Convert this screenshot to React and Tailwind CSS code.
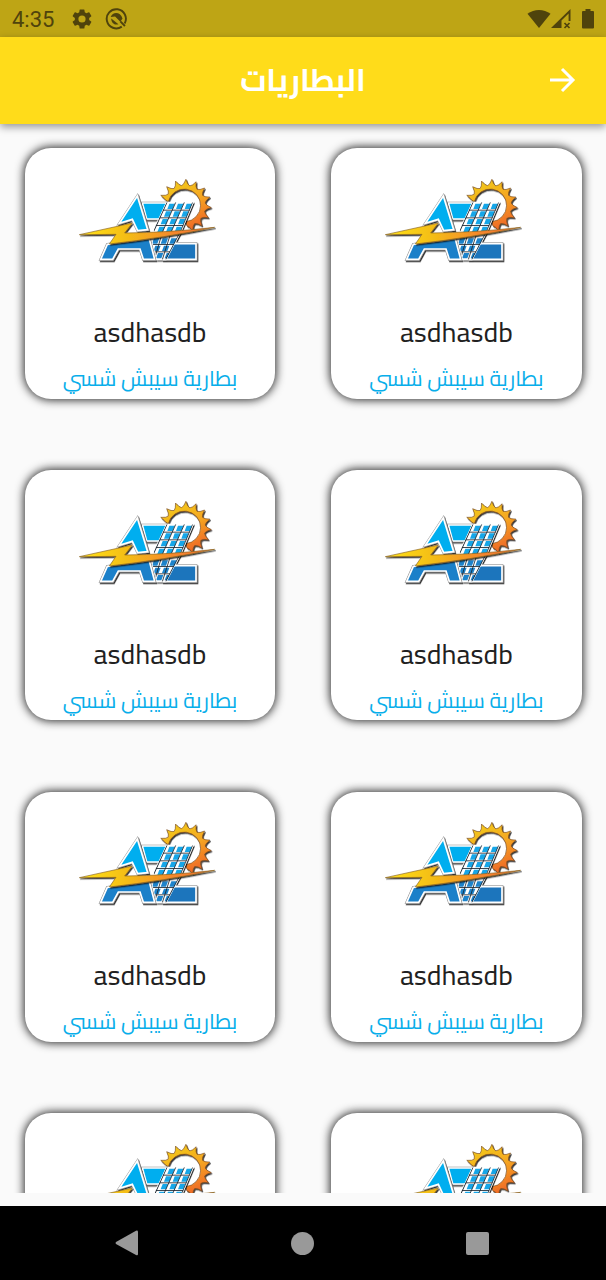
import { useId } from "react";

function point(cx, cy, r, deg) {
  const a = (deg * Math.PI) / 180;
  return `${(cx + r * Math.cos(a)).toFixed(1)} ${(cy + r * Math.sin(a)).toFixed(1)}`;
}

// Toothed crescent that forms the sun of the logo.
function gearPath() {
  const cx = 330;
  const cy = 92;
  const step = 23;
  let d = `M${point(cx, cy, 60, -164)}`;
  for (let i = 0; i < 11; i++) {
    const tip = -157 + i * step;
    d += ` Q${point(cx, cy, 63, tip - 5)} ${point(cx, cy, 79, tip)}`;
    d += ` Q${point(cx, cy, 63, tip + 5)} ${point(cx, cy, 61, tip + step / 2)}`;
  }
  return `${d} L332 140 A49 49 0 1 0 280 80 Z`;
}

const GEAR = gearPath();
const UPPER_A = "M187 63 L218 164 L188 167 L172 133 L133 145 Z";
const LOWER_A = "M97 208 L223 192 L239 253 L205 253 L195 222 L130 222 L113 253 L77 253 Z";
const TOP_BAR = "M202 84 H275 L255 132 H215 Z";
const BOTTOM_BAR = "M290 206 H363 V253 H267 Z";
const PANEL = "M275 82 H354 L318 168 L273 254 H246 L230 192 L238 162 Z";
const BOLT = "M13 179 L172 144 L149 174 Q280 173 419 157 Q270 188 103 207 L123 178 Z";
const CELLS = [
  [86, 277],
  [109, 267],
  [132, 257],
  [155, 247],
  [190, 231],
  [212, 235],
  [234, 243],
];

function Logo() {
  const id = useId();
  return (
    <svg viewBox="0 0 435 276" className="mr-[5px] h-[92px] w-[145px] shrink-0">
      <defs>
        <linearGradient id={`${id}sun`} x1="0.2" y1="0" x2="0.65" y2="1">
          <stop offset="0.1" stopColor="#f2c61a" />
          <stop offset="0.5" stopColor="#f5a623" />
          <stop offset="1" stopColor="#ee6426" />
        </linearGradient>
        <linearGradient id={`${id}bolt`}>
          <stop offset="0" stopColor="#ffe31b" />
          <stop offset="0.35" stopColor="#f4bd16" />
          <stop offset="0.7" stopColor="#f5872d" />
          <stop offset="1" stopColor="#f26f32" />
        </linearGradient>
        <clipPath id={`${id}panel`}>
          <path d={PANEL} />
        </clipPath>
        <filter id={`${id}shade`} x="-10%" y="-10%" width="120%" height="120%">
          <feDropShadow dx="3" dy="4" stdDeviation="1.300" floodColor="#000" floodOpacity="0.8" />
        </filter>
      </defs>
      <g filter={`url(#${id}shade)`}>
        <path d={GEAR} fill={`url(#${id}sun)`} stroke="#7a4a1c" strokeWidth="2" />
      </g>
      <g filter={`url(#${id}shade)`}>
        <path d={`${TOP_BAR} ${BOTTOM_BAR} ${LOWER_A}`} fill="none" stroke="#888" strokeWidth="8" />
        <path d={TOP_BAR} fill="#00aeef" stroke="#fff" strokeWidth="5" />
        <path d={BOTTOM_BAR} fill="#1b75bc" stroke="#fff" strokeWidth="5" />
        <path d={PANEL} fill="#fff" stroke="#fff" strokeWidth="4" />
      </g>
      <g clipPath={`url(#${id}panel)`}>
        {CELLS.map(([y, left]) =>
          [0, 1, 2].map((col) => {
            const x = left + col * 26;
            return (
              <path
                key={`${y}-${col}`}
                d={`M${x + 6} ${y} h16 l-6 16 h-16 z`}
                fill={y > 180 ? "#1d83cb" : "#16a6e8"}
              />
            );
          }),
        )}
        <path
          d="M303 80 L262 172 L238 254 M329 80 L288 172 L262 254 M230 105.500 H360 M230 128.500 H360 M230 151.500 H360 M230 208.500 H360 M230 230.500 H360"
          stroke="#17222c"
          strokeWidth="2.500"
          fill="none"
        />
        <path d="M276 80 L236 168 M354 82 L318 168 L273 254" fill="none" stroke="#17222c" strokeWidth="4" />
      </g>
      <path d={LOWER_A} fill="#1b80c9" stroke="#fff" strokeWidth="5" />
      <g filter={`url(#${id}shade)`}>
        <path d={UPPER_A} fill="none" stroke="#999" strokeWidth="8" />
        <path d={UPPER_A} fill="#00aeef" stroke="#fff" strokeWidth="5" />
      </g>
      <g filter={`url(#${id}shade)`}>
        <path d={BOLT} fill={`url(#${id}bolt)`} stroke="#8a6420" strokeWidth="2" />
      </g>
    </svg>
  );
}

function ProductCard({ name, description }) {
  return (
    <article className="flex h-[250.500px] w-[250.500px] flex-col items-center rounded-[26px] bg-white pt-[26.700px] shadow-[0_0_10px_1px_rgba(0,0,0,0.85)]">
      <Logo />
      {name && (
        <h2 className="mt-[45px] text-[27.800px] leading-[40px] whitespace-nowrap text-[#212121]">{name}</h2>
      )}
      {description && (
        <p dir="rtl" className="mt-[8px] text-[21.600px] leading-[36px] whitespace-nowrap text-[#08aeea]">
          {description}
        </p>
      )}
    </article>
  );
}

function StatusBar() {
  return (
    <div className="flex h-[37px] items-center bg-[#bea515] px-3 text-[#4f430c]">
      <span className="w-[44px] pt-0.5 font-[Roboto] text-[22px] leading-none">4:35</span>
      <svg viewBox="0 0 24 24" className="ml-[14px] size-[24px]" fill="currentColor">
        <path d="M19.140 12.940c.04-.3.06-.61.06-.94s-.02-.64-.07-.94l2.030-1.580a.49.49 0 0 0 .12-.61l-1.920-3.320a.49.49 0 0 0-.59-.22l-2.390.96a7 7 0 0 0-1.620-.94l-.36-2.540a.48.48 0 0 0-.48-.41h-3.840a.47.47 0 0 0-.47.41l-.36 2.540c-.59.24-1.130.57-1.620.94l-2.390-.96a.48.48 0 0 0-.59.22L2.740 8.870a.47.47 0 0 0 .12.61l2.030 1.580a6 6 0 0 0-.02 1.880l-2.030 1.580a.49.49 0 0 0-.12.61l1.920 3.320c.12.22.37.29.59.22l2.390-.96c.5.38 1.030.7 1.620.94l.36 2.540c.05.24.24.41.48.41h3.840c.24 0 .44-.17.47-.41l.36-2.540a7 7 0 0 0 1.620-.94l2.390.96c.22.08.47 0 .59-.22l1.920-3.320a.47.47 0 0 0-.12-.61zM12 15.600A3.600 3.600 0 1 1 12 8.400a3.600 3.600 0 0 1 0 7.200" />
      </svg>
      <svg viewBox="0 0 24 24" className="ml-[11px] size-[23px]" fill="none" stroke="currentColor">
        <path d="M17.500 20.500A10 10 0 1 1 20.500 17.200" strokeWidth="2" />
        <path d="M16 15L20.800 19.800" strokeWidth="2" />
        <path d="M6 10.500C8 4.500 16 4.500 18.300 12L16 15.500L10.500 9.800Z" fill="currentColor" stroke="none" />
        <path d="M6.500 12L14 18C10 19.500 6.500 16.500 6.500 12Z" fill="currentColor" stroke="none" />
      </svg>
      <svg viewBox="0 0 24 20" className="ml-auto h-[20px] w-[24px]" fill="currentColor">
        <path d="M0.500 4.800C7-0.400 17-0.400 23.500 4.800L12 19Z" />
      </svg>
      <svg viewBox="0 0 20 20" className="h-[20px] w-[20px]">
        <path d="M0 19L19.500 0V12H17.600V4.600L10.500 11.500V19Z" fill="currentColor" />
        <path d="M13.500 14L18.500 19M18.500 14L13.500 19" stroke="currentColor" strokeWidth="1.700" />
      </svg>
      <svg viewBox="0 0 12 20" className="ml-[11px] h-[20px] w-[12px]" fill="currentColor">
        <path d="M3.500 0H8.500V2H11Q12 2 12 3V18.500Q12 19.500 11 19.500H1Q0 19.500 0 18.500V3Q0 2 1 2H3.500Z" />
      </svg>
    </div>
  );
}

function AppBar() {
  return (
    <header className="z-10 grid h-[86.500px] grid-cols-[60px_1fr_60px] items-center bg-[#ffdc1a] shadow-[0_3px_8px_rgba(0,0,0,0.4)]">
      <span />
      <h1 dir="rtl" className="text-center text-[31px] leading-none font-bold text-white">
        البطاريات
      </h1>
      <svg viewBox="0 0 26 26" className="ml-[4px] size-[26px]" fill="none" stroke="white" strokeWidth="3">
        <path d="M0 13H23M12 2L23 13L12 24" />
      </svg>
    </header>
  );
}

function NavigationBar() {
  return (
    <nav className="mt-auto flex h-[74px] items-center bg-black pl-[115px]">
      <svg viewBox="0 0 24 26" className="h-[26px] w-[24px]" fill="#999">
        <path d="M1 12L21 0.700Q23 0 23 2V24Q23 26 21 25L1 14Q0 13 1 12Z" />
      </svg>
      <span className="ml-[152px] size-[23px] rounded-full bg-[#999]" />
      <span className="ml-[152px] size-[23px] rounded-[2px] bg-[#999]" />
    </nav>
  );
}

const battery = { name: "asdhasdb", description: "بطارية سيبش شسي" };
const products = [battery, battery, battery, battery, battery, battery, {}, {}];

export default function App() {
  return (
    <div className="flex h-[1280px] w-[606px] flex-col overflow-hidden bg-[#fafafa] font-[Cairo,sans-serif]">
      <StatusBar />
      <AppBar />
      <main className="grid h-[1069.500px] grid-cols-[250.500px_250.500px] content-start gap-x-[55.800px] gap-y-[71.200px] overflow-hidden pt-[24.800px] pl-[24.800px]">
        {products.map((product, index) => (
          <ProductCard key={index} name={product.name} description={product.description} />
        ))}
      </main>
      <NavigationBar />
    </div>
  );
}
